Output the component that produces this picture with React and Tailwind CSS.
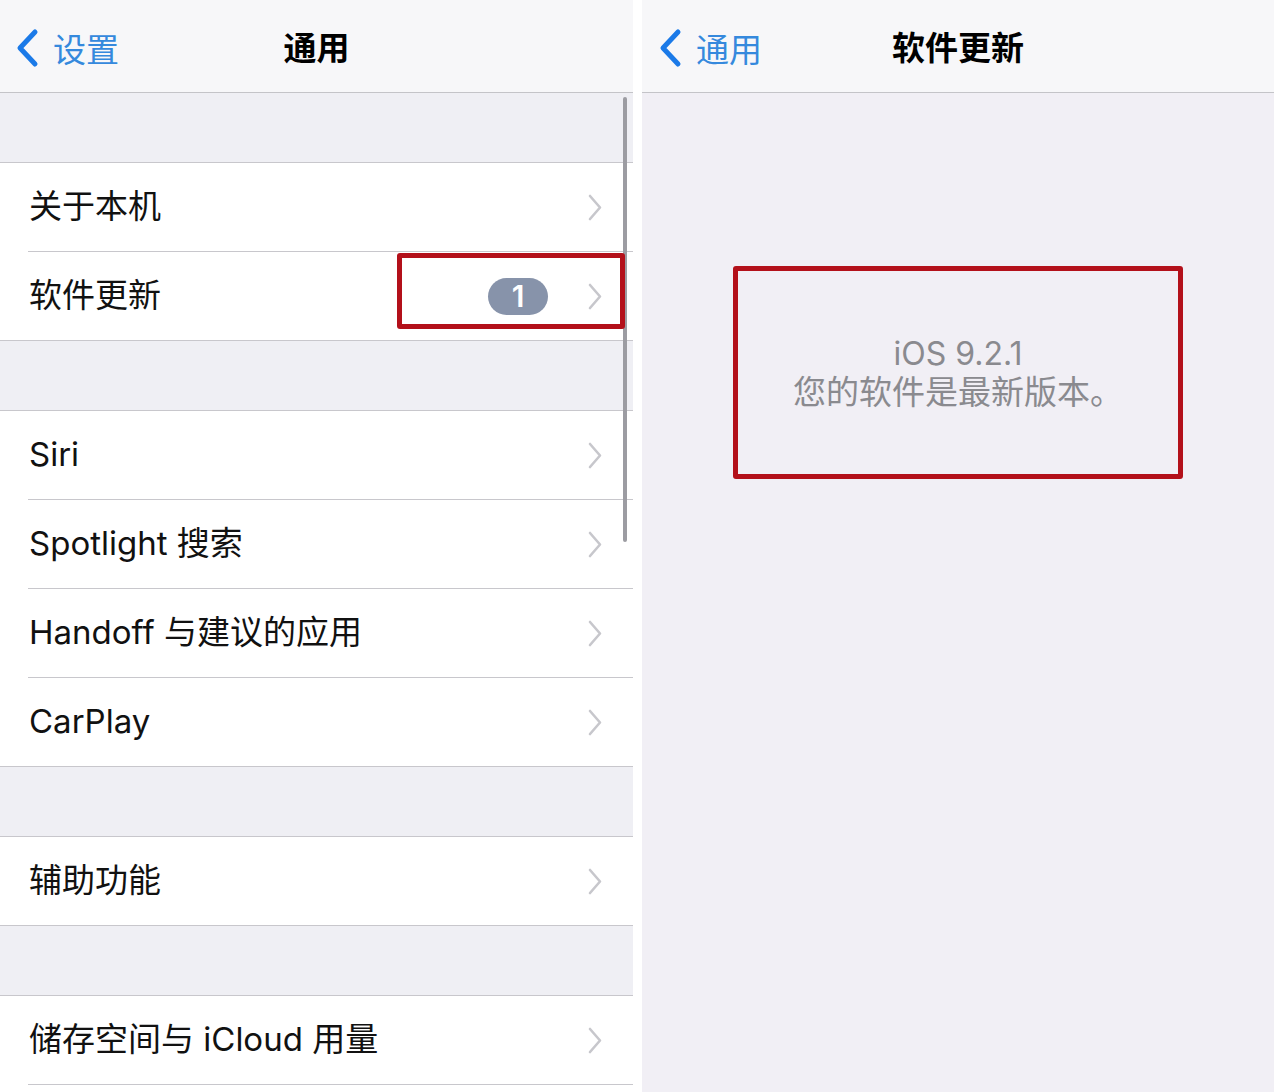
const FONT = { fontFamily: 'Inter, "Noto Sans CJK SC", sans-serif' };

const GROUPS = [
  ['关于本机', '软件更新'],
  ['Siri', 'Spotlight 搜索', 'Handoff 与建议的应用', 'CarPlay'],
  ['辅助功能'],
  ['储存空间与 iCloud 用量'],
];

function BackChevron() {
  return (
    <svg width="24" height="40" viewBox="0 0 24 40" className="shrink-0">
      <path d="M20 4 L5 20 L20 36" fill="none" stroke="#1b7ae8" strokeWidth="5" strokeLinecap="round" strokeLinejoin="round" />
    </svg>
  );
}

function Disclosure() {
  return (
    <svg width="14" height="27" viewBox="0 0 14 27" className="shrink-0">
      <path d="M2 2 L12 13.5 L2 25" fill="none" stroke="#c7c7cc" strokeWidth="2.6" strokeLinecap="round" strokeLinejoin="round" />
    </svg>
  );
}

function NavBar({ back, title, backOffset }) {
  return (
    <div className="relative h-[93px] shrink-0 bg-[#f7f7f9] border-b border-[#c4c4c8] flex items-center justify-center">
      <div className={`absolute top-[28px] flex items-start gap-[14px] ${backOffset}`}>
        <BackChevron />
        <span className="text-[33px] leading-[40px] text-[#3589dd] mt-[2px]">{back}</span>
      </div>
      <span className="text-[33px] font-semibold text-black mt-[6px]">{title}</span>
    </div>
  );
}

function Row({ label, badge, last }) {
  return (
    <>
      <div className="h-[88px] bg-white flex items-center pl-[29px] pr-[31px]">
        <span className="flex-1 text-[33px] text-[#111]">{label}</span>
        {badge && (
          <span className="mr-[40px] w-[60px] h-[37px] rounded-full bg-[#8793aa] text-white text-[30px] font-semibold flex items-center justify-center">
            {badge}
          </span>
        )}
        <Disclosure />
      </div>
      {!last && (
        <div className="h-px bg-white">
          <div className="ml-[28px] h-px bg-[#c8c7cc]" />
        </div>
      )}
    </>
  );
}

export default function App() {
  return (
    <div className="w-[1280px] h-[1092px] bg-white flex overflow-hidden" style={FONT}>
      {/* left: 通用 */}
      <div className="relative w-[633px] shrink-0 flex flex-col bg-[#efeff4]">
        <NavBar back="设置" title="通用" backOffset="left-[15px]" />
        {GROUPS.map((rows, gi) => (
          <div key={gi}>
            <div className="h-[69px]" />
            <div className="border-t border-[#c8c7cc]">
              {rows.map((r, i) => (
                <Row key={r} label={r} badge={r === '软件更新' ? '1' : null} last={gi < 3 && i === rows.length - 1} />
              ))}
            </div>
            {gi < 3 && <div className="h-px bg-[#c8c7cc]" />}
          </div>
        ))}
        <div className="flex-1 bg-white" />

        {/* scroll indicator */}
        <div className="absolute left-[623px] top-[97px] w-[4px] h-[445px] rounded-full bg-[#9c9ca2]" />
        {/* annotation */}
        <div className="absolute left-[397px] top-[253px] w-[228px] h-[76px] border-[5px] border-[#b3101a] rounded-[3px]" />
      </div>

      <div className="w-[9px] shrink-0" />

      {/* right: 软件更新 */}
      <div className="w-[632px] shrink-0 flex flex-col bg-[#f1eff5]">
        <NavBar back="通用" title="软件更新" backOffset="left-[16px]" />
        <div className="flex justify-center pt-[173px]">
          <div className="w-[450px] h-[213px] border-[5px] border-[#b3101a] rounded-[3px] flex flex-col items-center justify-center text-[#8a8a8f]">
            <span className="text-[32px] leading-[38px]">iOS 9.2.1</span>
            <span className="text-[33px] leading-[38px]">您的软件是最新版本。</span>
          </div>
        </div>
      </div>
    </div>
  );
}
